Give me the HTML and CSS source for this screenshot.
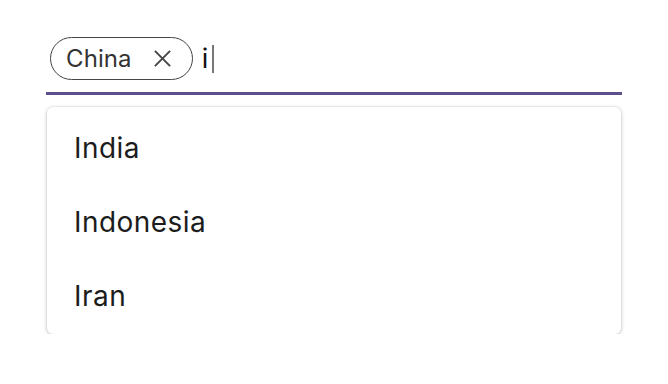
FILE: index.html
```html
<!DOCTYPE html>
<html>
<head>
<meta charset="utf-8">
<link rel="stylesheet" href="styles.css">
</head>
<body>
<div class="wrap">
  <div class="field">
    <span class="chip">
      <span class="chip-label">China</span>
      <svg class="chip-x" width="20" height="20" viewBox="0 0 20 20"><path d="M2 2 L18 18 M18 2 L2 18" stroke="#444" stroke-width="2" fill="none"/></svg>
    </span>
    <span class="typed">i</span><span class="caret"></span>
  </div>
  <ul class="menu">
    <li class="item">India</li>
    <li class="item">Indonesia</li>
    <li class="item">Iran</li>
  </ul>
</div>
</body>
</html>
```
FILE: styles.css
```css
html, body {
  margin: 0;
  padding: 0;
  background: #fff;
}
body {
  font-family: Inter, "Liberation Sans", sans-serif;
  color: #1a1a1a;
}
.wrap {
  width: 576px;
  margin-left: 46px;
  padding-top: 37px;
}
.field {
  display: flex;
  align-items: center;
  padding: 0 0 12px 4px;
  border-bottom: 3px solid #5d4e8c;
}
.chip {
  display: inline-flex;
  align-items: center;
  box-sizing: border-box;
  height: 43px;
  padding: 0 20px 0 15px;
  border: 1.5px solid #444;
  border-radius: 22px;
}
.chip-label {
  font-size: 24px;
  letter-spacing: 0.1px;
  color: #333;
}
.chip-x {
  margin-left: 21px;
  width: 19px;
  height: 19px;
}
.typed {
  margin-left: 9px;
  font-size: 27px;
  color: #111;
}
.caret {
  display: inline-block;
  width: 1.5px;
  height: 28px;
  margin-left: 4px;
  background: #777;
}
.menu {
  list-style: none;
  margin: 12px 0 0 1px;
  padding: 4px 0 1px;
  width: 574px;
  box-sizing: border-box;
  background: #fff;
  border-radius: 6px;
  box-shadow: 0 0 0 1px rgba(0,0,0,0.04), 0 1px 4px rgba(0,0,0,0.22);
}
.item {
  height: 74px;
  display: flex;
  align-items: center;
  padding-left: 27px;
  font-size: 28px;
  letter-spacing: 0.45px;
  color: #1c1c1c;
}
```
